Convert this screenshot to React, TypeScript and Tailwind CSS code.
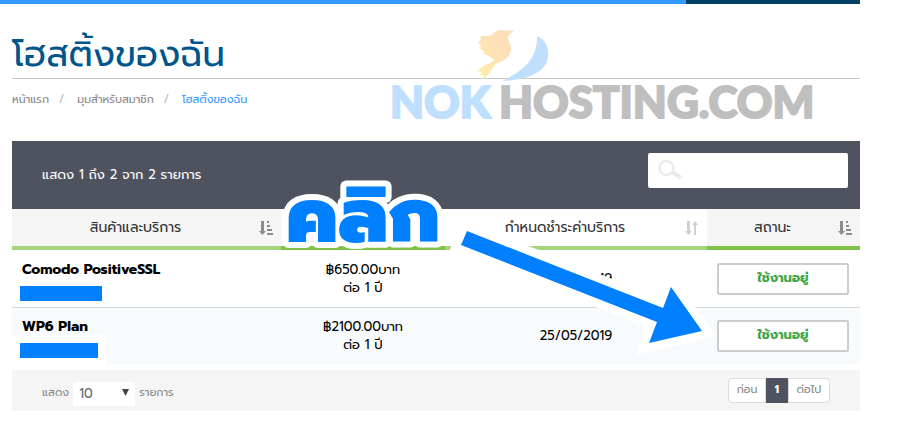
import { useState } from "react";

const services = [
  { name: "Comodo PositiveSSL", price: "฿650.00บาท", term: "ต่อ 1 ปี", due: "25/05/2019", mask: "w-[82px]" },
  { name: "WP6 Plan", price: "฿2100.00บาท", term: "ต่อ 1 ปี", due: "25/05/2019", mask: "w-[78px]" },
];

function SortIcon({ sorted }: { sorted?: boolean }) {
  return (
    <svg viewBox="0 0 14 14" className={`h-[14px] w-[14px] ${sorted ? "text-[#8c8c8c]" : "text-[#cfcfcf]"}`} fill="currentColor" aria-hidden="true">
      <path d="M2 0h3v10h2l-3.5 4L0 10h2z" />
      {sorted ? (
        <path d="M8 0h2v2H8zM8 4h3v2H8zM8 8h5v2H8zM8 12h6v2H8z" />
      ) : (
        <path d="M9 14h2V4h2L10 0 7 4h2z" />
      )}
    </svg>
  );
}

function Logo() {
  return (
    <svg viewBox="0 0 430 95" className="absolute top-[28px] left-[390px] h-[95px] w-[430px] overflow-visible" role="img" aria-label="NOKHOSTING.COM">
      <defs>
        <linearGradient id="bird" x1="1" y1="0" x2="0" y2="1">
          <stop offset="0" stopColor="#fddcba" />
          <stop offset="0.5" stopColor="#fee2b4" />
          <stop offset="1" stopColor="#fff0a5" />
        </linearGradient>
      </defs>
      <path
        d="M124 3C120 2 118 3 116 3 112 1 106 2 103 6 101 8 99 8 97 8L90 8 91 12 88 14 91 18 90 21 94 23 93 26 98 27 101 30 104 31C103 35 97 36 92 39L87 43 92 44 89 48 94 47 93 51C97 48 99 46 102 41 105 36 107 35 110 34 117 32 121 26 121 21 121 16 118 14 118 9 119 6 121 5 124 3z"
        fill="url(#bird)"
      />
      <path d="M147 8c9 4 12 12 11 21-2 18-26 23-46 24 19-9 36-21 35-45z" fill="#bfdfff" />
      <g fontFamily="Lato" fontWeight="900" fontSize="44" strokeWidth="2">
        <text x="0" y="90" fill="#bfdfff" stroke="#bfdfff">NOK</text>
        <text x="109" y="90" fill="#bfbfbf" stroke="#bfbfbf">HOSTING.COM</text>
      </g>
    </svg>
  );
}

// Guide drawing laid over the table
function ClickHint() {
  return (
    <svg viewBox="0 0 430 190" className="pointer-events-none absolute top-[30px] left-[268px] h-[190px] w-[430px] overflow-visible" aria-hidden="true">
      <text
        x="6"
        y="71"
        fontSize="77"
        fontWeight="900"
        fill="#0080ff"
        stroke="#fff"
        strokeWidth="12"
        strokeLinejoin="round"
        paintOrder="stroke"
      >
        คลิก
      </text>
      <path
        d="M187 60 383 137 391 116 422 160 369 172 377 151 181 74z"
        fill="#0080ff"
        stroke="#fff"
        strokeWidth="17"
        paintOrder="stroke"
      />
    </svg>
  );
}

export default function App() {
  const [query, setQuery] = useState("");
  const rows = services.filter((s) => s.name.toLowerCase().includes(query.toLowerCase()));

  return (
    <div className="bg-white font-['Prompt','Kanit','Noto_Sans','Noto_Sans_Thai',sans-serif] text-black">
      <div className="mr-[47px] flex h-1">
        <div className="flex-1 bg-[#3399ff]" />
        <div className="w-[174px] bg-[#003f66]" />
      </div>

      <Logo />

      <main className="mr-[47px] ml-3">
        <header className="border-b border-[#c8c8c8] pt-[26px]">
          <h1 className="text-[36px] leading-[48px] text-[#00558c]">โฮสติ้งของฉัน</h1>
        </header>
        <nav className="flex h-[62px] pt-[11px] text-[11px] leading-[20px] text-[#888]">
          <a href="#home">หน้าแรก</a>
          <span className="pr-[13px] pl-[10px] text-[#bbb]">/</span>
          <a href="#client">มุมสำหรับสมาชิก</a>
          <span className="pr-[13px] pl-[10px] text-[#bbb]">/</span>
          <span className="text-[#3399ff]">โฮสติ้งของฉัน</span>
        </nav>

        <section className="relative">
          <div className="flex h-[68px] items-start justify-between bg-[#4f535f] pt-3 pr-3 pl-[30px]">
            <p className="pt-3 text-[13px] leading-[20px] text-white">แสดง 1 ถึง 2 จาก 2 รายการ</p>
            <label className="relative">
              <svg viewBox="0 0 24 20" className="absolute top-[7px] left-[10px] h-5 w-6" fill="none" stroke="#e8ebef" aria-hidden="true">
                <circle cx="8.5" cy="8" r="7" strokeWidth="2.5" />
                <path d="m14 12 9 6" strokeWidth="4.5" />
              </svg>
              <input
                type="search"
                aria-label="ค้นหา"
                value={query}
                onChange={(e) => setQuery(e.target.value)}
                className="h-[35px] w-[200px] rounded-xs bg-white pr-2 pl-10 text-sm outline-none"
              />
            </label>
          </div>

          <table className="w-full table-fixed border-separate border-spacing-0 text-center text-[13px] leading-[18px]">
            <colgroup>
              <col className="w-[269px]" />
              <col className="w-[164px]" />
              <col />
              <col className="w-[153px]" />
            </colgroup>
            <thead>
              <tr className="h-[41px] text-[14px] text-[#333]">
                <th className="border-b-4 border-[#a5d47b] bg-[#f5f5f5] p-0 font-normal">
                  <div className="flex items-center pr-2">
                    <span className="flex-1">สินค้าและบริการ</span>
                    <SortIcon sorted />
                  </div>
                </th>
                <th className="border-b-4 border-[#7fc248] p-0" />
                <th className="border-b-4 border-[#a5d47b] p-0 font-normal">
                  <div className="flex items-center pr-2">
                    <span className="flex-1">กำหนดชำระค่าบริการ</span>
                    <SortIcon />
                  </div>
                </th>
                <th className="border-b-4 border-[#7fc248] bg-[#f5f5f5] p-0 font-normal">
                  <div className="flex items-center pr-2">
                    <span className="flex-1">สถานะ</span>
                    <SortIcon sorted />
                  </div>
                </th>
              </tr>
            </thead>
            <tbody>
              {rows.map((s) => (
                <tr key={s.name} className="h-[57px] even:bg-[#f8fbfd] not-first:*:border-t *:border-[#d8d8d8]">
                  <td className="px-2 pt-1 pb-0 text-left">
                    <div className="pl-[2px] text-[14px] font-bold">{s.name}</div>
                    <div className={`mt-[7px] h-[15px] bg-[#0080ff] shadow-[0_0_0_8px_#fff] ${s.mask}`} />
                  </td>
                  <td>
                    {s.price}
                    <br />
                    {s.term}
                  </td>
                  <td>{s.due}</td>
                  <td className="py-0 pr-[11px] pl-[10px]">
                    <button className="h-8 w-full rounded-xs border-2 border-[#ccc] bg-white pb-[2px] text-[13px] font-bold text-[#3fa648]">
                      ใช้งานอยู่
                    </button>
                  </td>
                </tr>
              ))}
            </tbody>
          </table>

          <footer className="mt-[6px] flex h-[41px] items-center justify-between bg-[#f5f5f5] px-[30px] text-[11px] text-[#888]">
            <label className="flex items-center gap-1 pt-[6px]">
              แสดง
              <span className="relative">
                <select className="h-6 w-[62px] appearance-none rounded-xs bg-white pl-[6px] text-[13px] text-[#666]">
                  <option>10</option>
                  <option>25</option>
                  <option>50</option>
                </select>
                <svg viewBox="0 0 6 6" className="pointer-events-none absolute top-[7px] right-[6px] h-[7px] w-[7px]" fill="#444" aria-hidden="true">
                  <path d="M0 0h6L3 6z" />
                </svg>
              </span>
              รายการ
            </label>
            <div className="flex h-[25px]">
              <button className="w-[38px] rounded-l-sm border border-[#ddd] bg-white">ก่อน</button>
              <button className="w-[22px] bg-[#4f535f] font-bold text-white">1</button>
              <button className="w-[42px] rounded-r-sm border border-[#ddd] bg-white">ต่อไป</button>
            </div>
          </footer>

          <ClickHint />
        </section>
      </main>
    </div>
  );
}
